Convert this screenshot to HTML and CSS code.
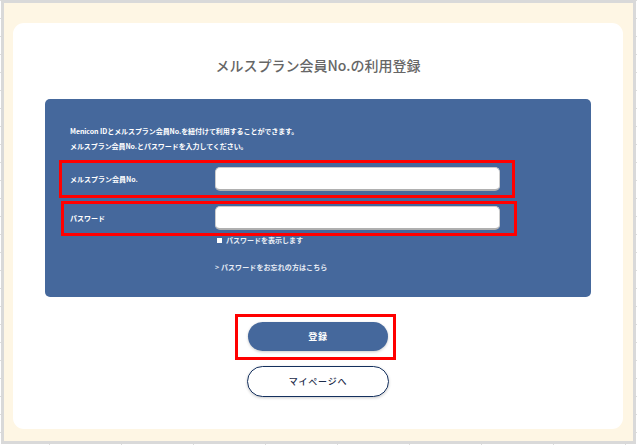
FILE: index.html
```html
<html>
<head>
<title>メルスプラン会員No.の利用登録</title>
<meta charset="utf-8">
<link rel="stylesheet" href="styles.css">
</head>
<body>

    <div class="frame">
        <div class="card">
            <h2 class="title">メルスプラン会員No.の利用登録</h2>

            <div class="panel">
                <p class="lead">Menicon IDとメルスプラン会員No.を紐付けて利用することができます。<br/>メルスプラン会員No.とパスワードを入力してください。</p>

                <div class="row">
                    <label for="member">メルスプラン会員No.</label>
                    <input id="member" type="text" />
                </div>
                <div class="row">
                    <label for="password">パスワード</label>
                    <input id="password" type="password" />
                </div>
                <div class="show">
                    <span class="check"></span>
                    <span>パスワードを表示します</span>
                </div>
                <a class="forgot" href="#">&gt; パスワードをお忘れの方はこちら</a>
            </div>

            <div class="buttons">
                <button class="btn primary" type="button">登録</button>
                <button class="btn outline" type="button">マイページへ</button>
            </div>
        </div>
    </div>

    <div class="mark mark-member"></div>
    <div class="mark mark-password"></div>
    <div class="mark mark-submit"></div>

</body>
</html>
```

FILE: styles.css
```css
html, body {
  margin: 0;
  height: 445px;
  overflow: hidden;
}

body {
  font-family: "Noto Sans CJK JP", "Noto Sans", sans-serif;
  background-color: #fff;
  background-image:
    linear-gradient(#ddd 1px, transparent 1px),
    linear-gradient(90deg, #ddd 1px, transparent 1px);
  background-size: 18px 18px, 72px 72px;
  background-position: 0 0, 49px 0;
}

/* Grey outer edge with the cream page inside */
.frame {
  box-sizing: border-box;
  width: 635px;
  height: 444px;
  margin-left: 1px;
  border: 3px solid #d9d9d9;
  padding: 20px 10px 12px 9px;
  background: #fef6e4;
}

.card {
  height: 406px;
  box-sizing: border-box;
  padding-top: 30px;
  background: #fff;
  border-radius: 11px;
}

.title {
  margin: 0 0 22px 0;
  height: 24px;
  line-height: 24px;
  font-size: 14px;
  font-weight: 500;
  text-align: center;
  color: #666;
}

.panel {
  box-sizing: border-box;
  height: 198px;
  margin: 0 32px;
  padding: 25px 91px 0 25px;
  background: #45689c;
  border-radius: 5px;
  color: #fff;
  font-size: 7px;
  font-weight: 700;
}

.lead {
  margin: 0 0 13px 0;
  line-height: 15px;
  letter-spacing: -0.07px;
}

.row {
  display: flex;
  align-items: center;
  margin-bottom: 15px;
}

.row label {
  width: 145px;
}

.row input {
  box-sizing: border-box;
  flex: 1;
  height: 24px;
  background: #fff;
  border: 1px solid #ccc;
  border-bottom: 2px solid #b0b0b0;
  border-radius: 5px;
}

.show {
  display: flex;
  align-items: center;
  gap: 4px;
  margin: -12px 0 0 145px;
  line-height: 14px;
  color: #e8edf5;
}

.check {
  width: 5px;
  height: 5px;
  margin-left: 2px;
  background: #fff;
}

.forgot {
  display: block;
  margin: 13px 0 0 145px;
  line-height: 14px;
  letter-spacing: 0.1px;
  color: #e8edf5;
  text-decoration: none;
}

.buttons {
  display: flex;
  flex-direction: column;
  align-items: center;
  gap: 15px;
  margin-top: 25px;
}

.btn {
  box-sizing: border-box;
  padding: 0;
  border-radius: 16px;
  font-family: inherit;
  font-size: 9px;
  font-weight: 500;
  letter-spacing: 0.8px;
  box-shadow: 0 1px 3px rgba(0, 0, 0, 0.2);
}

.primary {
  width: 140px;
  height: 29px;
  border: 0;
  background: #45689c;
  color: #fff;
  font-weight: 700;
}

.outline {
  width: 142px;
  height: 31px;
  border: 1px solid #14305e;
  background: #fff;
  color: #1d2c4a;
}

/* Red boxes drawn over the screenshot */
.mark {
  position: absolute;
  box-sizing: border-box;
  border: 3px solid #f00;
}

.mark-member {
  left: 59px;
  top: 160px;
  width: 456px;
  height: 38px;
}

.mark-password {
  left: 61px;
  top: 201px;
  width: 456px;
  height: 35px;
}

.mark-submit {
  left: 235px;
  top: 314px;
  width: 161px;
  height: 46px;
}
```
